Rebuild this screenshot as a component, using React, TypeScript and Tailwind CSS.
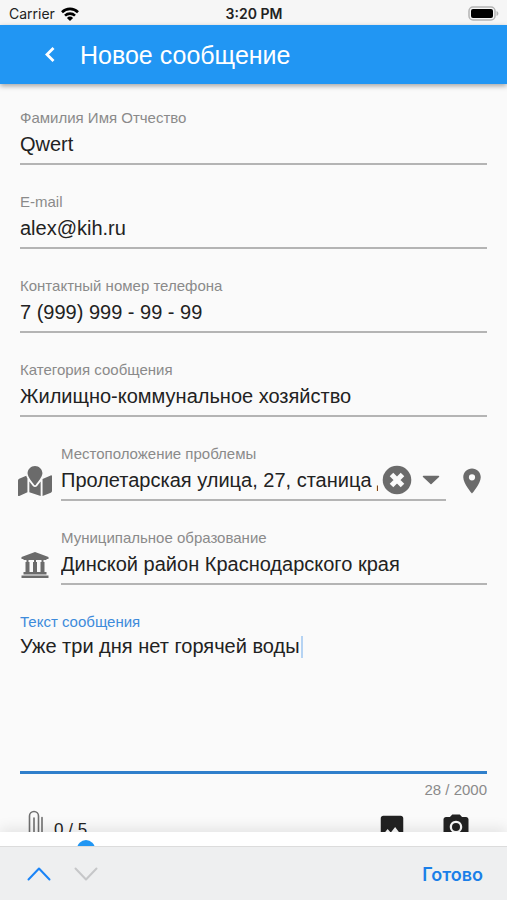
import { useState } from 'react'
import type { ReactNode } from 'react'
import { MdCameraAlt, MdImage, MdPlace } from 'react-icons/md'
import { FaMapMarked } from 'react-icons/fa'

const MAX_LENGTH = 2000
const MAX_FILES = 5

const CONTACT_FIELDS = [
  { id: 'name',     label: 'Фамилия Имя Отчество',      type: 'text',  value: 'Qwert' },
  { id: 'email',    label: 'E-mail',                    type: 'email', value: 'alex@kih.ru' },
  { id: 'phone',    label: 'Контактный номер телефона', type: 'tel',   value: '7 (999) 999 - 99 - 99' },
  { id: 'category', label: 'Категория сообщения',       type: 'text',  value: 'Жилищно-коммунальное хозяйство' },
]

interface FieldProps {
  id: string
  label: string
  type?: string
  value: string
  children?: ReactNode
}

function Field({ id, label, type = 'text', value, children }: FieldProps) {
  const [text, setText] = useState(value)
  return (
    <div className="min-w-0 flex-1">
      <label htmlFor={id} className="block h-5 text-[15px] leading-5 text-[#8a8a8a]">{label}</label>
      <div className="flex h-[37px] items-center border-b-2 border-[#b4b4b4] pb-1">
        <input
          id={id}
          type={type}
          value={text}
          onChange={e => setText(e.target.value)}
          className="h-7 min-w-0 flex-1 bg-transparent text-[20px] text-[#222] outline-none"
        />
        {children}
      </div>
    </div>
  )
}

function StatusBar() {
  return (
    <div className="grid h-[25px] shrink-0 grid-cols-3 items-center bg-[#f6f6f6] pt-0.5 pr-2 pl-[9px] font-[Inter,sans-serif] text-sm text-[#222]">
      <div className="flex items-center gap-1.5">
        <span>Carrier</span>
        <svg viewBox="0 0 18 14" className="h-3.5 w-[18px]" fill="none" stroke="#000" strokeWidth="2.6">
          <path d="M1 5.2a11.4 11.4 0 0 1 16 0" />
          <path d="M4 8.6a7.2 7.2 0 0 1 10 0" />
          <path d="M9 14 5.9 10.9a4.4 4.4 0 0 1 6.2 0z" fill="#000" stroke="none" />
        </svg>
      </div>
      <span className="text-center font-semibold">3:20 PM</span>
      <svg viewBox="0 0 31 15" className="h-[15px] w-[31px] justify-self-end">
        <rect x="1" y="1" width="26" height="13" rx="4" fill="#f6f6f6" stroke="#b4b4b4" strokeWidth="1.5" />
        <rect x="3" y="3" width="22" height="9" rx="2" fill="#000" />
        <path d="M28.5 5c2.5.8 2.5 4.2 0 5z" fill="#b4b4b4" />
      </svg>
    </div>
  )
}

function MessageField() {
  const [message, setMessage] = useState('Уже три дня нет горячей воды')
  const [touched, setTouched] = useState(false)
  return (
    <div>
      <label htmlFor="message" className="block h-5 text-[15px] leading-5 text-[#3d8bdb]">Текст сообщения</label>
      <div className="relative">
        <textarea
          id="message"
          value={message}
          maxLength={MAX_LENGTH}
          onChange={e => { setMessage(e.target.value); setTouched(true) }}
          className="block h-[142px] w-full resize-none border-b-3 border-[#2f7fcb] bg-transparent pt-0.5 text-[20px] leading-6 text-[#222] outline-none"
        />
        {!touched && <span className="absolute top-1 left-[281px] h-[22px] w-0.5 bg-[#b5d3f3]" />}
      </div>
      <div className="mt-1.5 text-right text-[15px] leading-5 text-[#8a8a8a]">{message.length} / {MAX_LENGTH}</div>
    </div>
  )
}

export default function App() {
  return (
    <div className="flex h-screen flex-col overflow-hidden bg-[#fafafa] font-['Liberation_Sans',Arial,sans-serif]">
      <StatusBar />

      <header className="z-10 flex h-[59px] shrink-0 items-center bg-[#2196f3] pl-[35px] text-white shadow-[0_2px_5px_rgba(0,0,0,0.35)]">
        <button aria-label="Назад" className="mr-4">
          <svg viewBox="0 0 29 29" className="size-[29px]" fill="none" stroke="#fff" strokeWidth="2.8">
            <path d="M18.5 8 12 14.500l6.500 6.500" />
          </svg>
        </button>
        <h1 className="text-[25px] leading-8">Новое сообщение</h1>
      </header>

      <main className="flex min-h-0 flex-1 flex-col gap-[27px] overflow-hidden px-5 pt-6">
        {CONTACT_FIELDS.map(f => (
          <div key={f.id} className="flex">
            <Field {...f} />
          </div>
        ))}

        <div className="flex items-center gap-[11px]">
          <div className="flex w-[30px] shrink-0 justify-center pt-4 text-[#6b6b6b]">
            <FaMapMarked size={34} className="shrink-0" />
          </div>
          <Field id="location" label="Местоположение проблемы" value="Пролетарская улица, 27, станица Динская">
            <button aria-label="Очистить" className="mx-1">
              <svg viewBox="0 0 30 30" className="size-[30px]">
                <circle cx="15" cy="15" r="14.3" fill="#6b6b6b" />
                <path d="M9.5 9.5 20.5 20.5M20.5 9.5 9.5 20.5" stroke="#fafafa" strokeWidth="5" />
              </svg>
            </button>
            <button aria-label="Показать варианты" className="mx-1.5">
              <svg viewBox="0 0 18 10" className="h-2.5 w-[18px]">
                <path d="M1.5 1.5h15L9 8.5z" fill="#6b6b6b" stroke="#6b6b6b" strokeWidth="1.5" strokeLinejoin="round" />
              </svg>
            </button>
          </Field>
          <button aria-label="Указать на карте" className="flex w-[30px] shrink-0 justify-center pt-4 text-[#6b6b6b]">
            <MdPlace size={30} />
          </button>
        </div>

        <div className="flex items-center gap-[11px]">
          <div className="flex w-[30px] shrink-0 justify-center pt-4">
            <svg viewBox="0 0 28 26" className="h-[26px] w-7" fill="#6b6b6b">
              <path d="M14 0 27.5 5v2h-2v1h-23V7h-2V5z" />
              <path d="M4.5 10h4v10h-4zM12 10h4v10h-4zM19.5 10h4v10h-4z" />
              <path d="M5.500 8h2v3h-2zM13 8h2v3h-2zM20.500 8h2v3h-2z" />
              <path d="M2.5 20h23v2.500h-23zM.5 23.500h27V26H.5z" />
            </svg>
          </div>
          <Field id="district" label="Муниципальное образование" value="Динской район Краснодарского края" />
        </div>

        <div className="flex shrink-0 flex-col gap-2.5">
          <MessageField />
          <div className="flex items-start pr-4 pl-2 text-[#222]">
            <svg viewBox="0 0 16 32" className="h-8 w-4" fill="none" stroke="#707070" strokeWidth="1.6" strokeLinecap="round">
              <path d="M14 7.500V24a6 6 0 0 1-12.500 0V6a4.500 4.500 0 0 1 9 0v17a2 2 0 0 1-4.500 0V8" />
            </svg>
            <span className="ml-2.5 pt-2 text-[17px] leading-6">0 / {MAX_FILES}</span>
            <button aria-label="Выбрать фото" className="ml-auto pt-0.5">
              <MdImage size={30} />
            </button>
            <button aria-label="Сделать снимок" className="ml-[34px] pt-0.5">
              <MdCameraAlt size={30} />
            </button>
          </div>
        </div>
      </main>

      <div className="z-10 flex h-3.5 shrink-0 items-start bg-white shadow-[0_-3px_14px_rgba(0,0,0,0.1)]">
        <div className="h-3.5 overflow-hidden pt-2 pl-[77px]">
          <div className="size-[18px] rounded-full bg-[#2196f3]" />
        </div>
      </div>

      <footer className="z-10 flex h-[54px] shrink-0 items-center border-t border-[#dcdcdc] bg-[#eeeff0] pr-6 pl-[27px]">
        <button aria-label="Предыдущее поле">
          <svg viewBox="0 0 24 14" className="h-3.5 w-6" fill="none" stroke="#1a84f7" strokeWidth="2" strokeLinecap="round" strokeLinejoin="round">
            <path d="M1.5 12.5 12 1.5l10.5 11" />
          </svg>
        </button>
        <button aria-label="Следующее поле" className="ml-[23px]" disabled>
          <svg viewBox="0 0 24 14" className="h-3.5 w-6" fill="none" stroke="#c6c7c9" strokeWidth="2" strokeLinecap="round" strokeLinejoin="round">
            <path d="M1.5 1.5 12 12.5l10.5-11" />
          </svg>
        </button>
        <button className="ml-auto pt-0.5 font-[Inter,sans-serif] text-lg font-semibold text-[#1a7fe8]">Готово</button>
      </footer>
    </div>
  )
}
